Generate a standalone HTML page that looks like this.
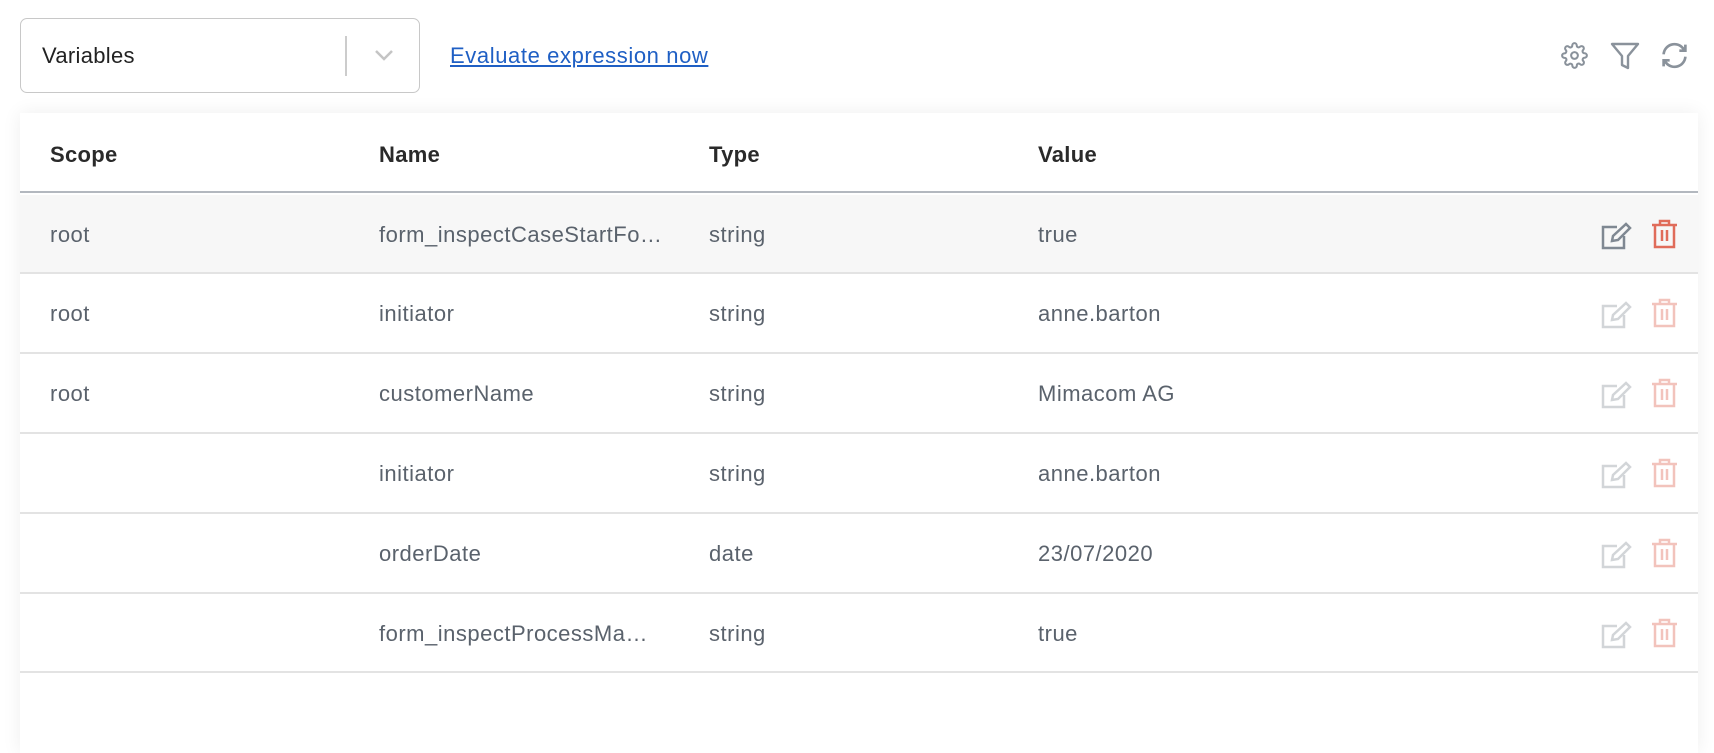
<!DOCTYPE html>
<html><head><meta charset="utf-8"><style>
*{margin:0;padding:0;box-sizing:border-box}
body{width:1714px;height:738px;background:#fff;font-family:"Liberation Sans",Arial,sans-serif;position:relative;overflow:hidden}
.sel{position:absolute;left:20px;top:18px;width:400px;height:75px;border:1.5px solid #c8c8c8;border-radius:7px}
.sel span{position:absolute;left:21px;top:24px;font-size:22px;letter-spacing:0.3px;color:#222}
.sel .div{position:absolute;left:324px;top:17px;width:1.5px;height:40px;background:#ccc}
.link{position:absolute;left:450px;top:43px;font-size:22px;letter-spacing:0.6px;color:#1f5fc4;text-decoration:underline}
.tbl{position:absolute;left:20px;top:113px;width:1678px;height:640px;background:#fff;box-shadow:0 0 18px rgba(0,0,0,0.07)}
.hdr{position:absolute;left:0;top:0;width:100%;height:80px;border-bottom:2px solid #b3b8bf}
.hdr div{position:absolute;top:29px;font-size:22px;letter-spacing:0.3px;font-weight:bold;color:#2a2a2a}
.row{position:absolute;left:0;width:100%;height:80px;border-bottom:2px solid #e3e3e3}
.row div.t{position:absolute;top:27px;font-size:22px;letter-spacing:0.5px;color:#5a626c}
.ic{position:absolute;top:26px}
.c1{left:30px}.c2{left:359px}.c3{left:689px}.c4{left:1018px}
</style></head><body>
<div class="sel"><span>Variables</span><div class="div"></div>
<svg style="position:absolute;left:352px;top:28px" width="22" height="16" viewBox="0 0 22 16"><path d="M3 4 L11 12 L19 4" fill="none" stroke="#c4c4c4" stroke-width="2.5"/></svg></div>
<div class="link">Evaluate expression now</div>
<svg style="position:absolute;left:1561px;top:42px" width="27" height="27" viewBox="0 0 24 24" fill="none" stroke="#8a929b" stroke-width="1.8"><circle cx="12" cy="12" r="3"/><path d="M19.4 15a1.65 1.65 0 0 0 .33 1.82l.06.06a2 2 0 1 1-2.830 2.83l-.06-.06a1.65 1.65 0 0 0-1.82-.33 1.650 1.65 0 0 0-1 1.51V21a2 2 0 1 1-4 0v-.09A1.65 1.65 0 0 0 9 19.4a1.65 1.65 0 0 0-1.82.33l-.06.06a2 2 0 1 1-2.83-2.83l.06-.06a1.65 1.65 0 0 0 .33-1.82 1.65 1.65 0 0 0-1.51-1H3a2 2 0 1 1 0-4h.09A1.65 1.65 0 0 0 4.6 9a1.65 1.65 0 0 0-.33-1.82l-.06-.06a2 2 0 1 1 2.83-2.83l.06.06a1.65 1.65 0 0 0 1.82.33H9a1.65 1.65 0 0 0 1-1.51V3a2 2 0 1 1 4 0v.09a1.65 1.65 0 0 0 1 1.51 1.65 1.65 0 0 0 1.82-.33l.06-.06a2 2 0 1 1 2.83 2.83l-.06.06a1.65 1.65 0 0 0-.33 1.82V9a1.65 1.65 0 0 0 1.51 1H21a2 2 0 1 1 0 4h-.09a1.65 1.65 0 0 0-1.51 1z"/></svg>
<svg style="position:absolute;left:1610px;top:41px" width="30" height="30" viewBox="0 0 30 30" fill="none" stroke="#8a929b" stroke-width="2.4" stroke-linejoin="round"><path d="M2 3 H28 L18 15 V27 L12 24 V15 Z"/></svg>
<svg style="position:absolute;left:1660px;top:41px" width="29" height="29" viewBox="0 0 24 24" fill="none" stroke="#8a929b" stroke-width="2.2"><path d="M3 11a9 9 0 0 1 16-5l2 2M21 3v5h-5M21 13a9 9 0 0 1-16 5l-2-2M3 21v-5h5"/></svg>
<div class="tbl">
<div class="hdr"><div class="c1">Scope</div><div class="c2">Name</div><div class="c3">Type</div><div class="c4">Value</div></div>
<div class="row" style="top:82px;background:#f7f7f7;height:79px"><div class="t c1">root</div><div class="t c2">form_inspectCaseStartFo…</div><div class="t c3">string</div><div class="t c4">true</div>
<svg class="ic" style="left:1580px" width="34" height="30" viewBox="0 0 34 30" fill="none" stroke="#7f8892" stroke-width="2.5"><path d="M17 6 H3 V27 H24 V15"/><path d="M12 20 L13 15 L26 3 L30 7 L18 19 Z"/></svg>
<svg class="ic" style="left:1631px;top:24px" width="27" height="30" viewBox="0 0 27 30" fill="none" stroke="#e06c5a" stroke-width="2.5"><path d="M1 6 H26 M9 6 V2 H18 V6 M4 6 V28 H23 V6 M11 11 V22 M16 11 V22"/></svg></div>
<div class="row" style="top:161px"><div class="t c1">root</div><div class="t c2">initiator</div><div class="t c3">string</div><div class="t c4">anne.barton</div></div>
<div class="row" style="top:241px"><div class="t c1">root</div><div class="t c2">customerName</div><div class="t c3">string</div><div class="t c4">Mimacom AG</div></div>
<div class="row" style="top:321px"><div class="t c2">initiator</div><div class="t c3">string</div><div class="t c4">anne.barton</div></div>
<div class="row" style="top:401px"><div class="t c2">orderDate</div><div class="t c3">date</div><div class="t c4">23/07/2020</div></div>
<div class="row" style="top:481px;height:79px"><div class="t c2">form_inspectProcessMa…</div><div class="t c3">string</div><div class="t c4">true</div></div>
</div>
<script>
var rows=document.querySelectorAll('.row');
for(var i=1;i<rows.length;i++){rows[i].insertAdjacentHTML('beforeend','<svg class="ic" style="left:1580px;opacity:.35" width="34" height="30" viewBox="0 0 34 30" fill="none" stroke="#7f8892" stroke-width="2.5"><path d="M17 6 H3 V27 H24 V15"/><path d="M12 20 L13 15 L26 3 L30 7 L18 19 Z"/></svg><svg class="ic" style="left:1631px;top:24px;opacity:.4" width="27" height="30" viewBox="0 0 27 30" fill="none" stroke="#e06c5a" stroke-width="2.5"><path d="M1 6 H26 M9 6 V2 H18 V6 M4 6 V28 H23 V6 M11 11 V22 M16 11 V22"/></svg>');}
</script>
</body></html>
